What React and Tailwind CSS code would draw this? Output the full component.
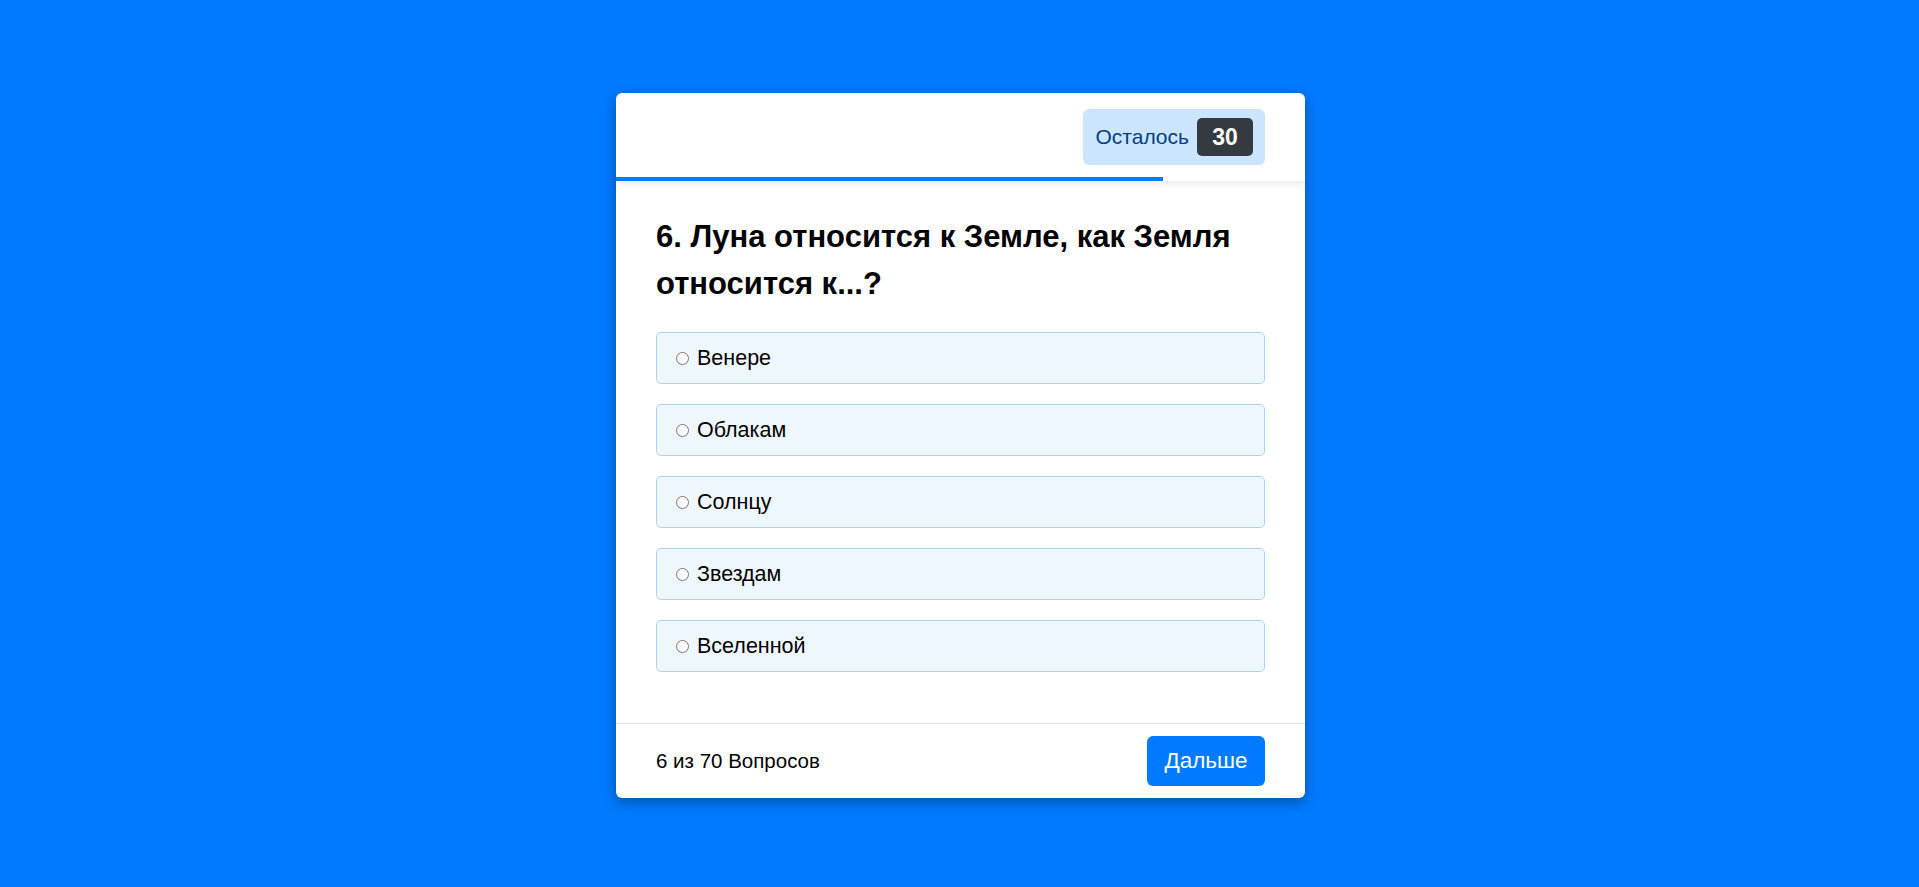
import { useState } from 'react';

const question = {
  number: 6,
  text: 'Луна относится к Земле, как Земля относится к...?',
  options: ['Венере', 'Облакам', 'Солнцу', 'Звездам', 'Вселенной'],
};

const total = 70;
const remaining = 30;
const progress = 79.4;

export default function App() {
  const [picked, setPicked] = useState(null);

  return (
    <div className="min-h-screen bg-[#007bff] flex justify-center pt-[93px] font-['Liberation_Sans',Arial,sans-serif]">
      <div className="w-[689px] ml-[2px] h-fit bg-white rounded-[6px] shadow-[0_4px_14px_rgba(0,0,0,0.35)] flex flex-col overflow-hidden">
        {/* Header with timer */}
        <div className="relative z-10 shadow-[0_4px_6px_rgba(0,0,0,0.07)]">
          <div className="h-[84px] flex items-center justify-end px-10 pt-[4px]">
            <div className="h-[56px] flex items-center gap-2 pl-3 pr-3 bg-[#cce5ff] rounded-[6px]">
              <span className="text-[21px] text-[#004085]">Осталось</span>
              <span className="h-[38px] w-[56px] grid place-items-center rounded-[5px] bg-[#343a40] text-white text-[23px] font-bold">
                {remaining}
              </span>
            </div>
          </div>
          <div className="h-[4px] bg-white">
            <div className="h-full bg-[#007bff]" style={{ width: `${progress}%` }} />
          </div>
        </div>

        {/* Question body */}
        <div className="px-10 pt-8 pb-[51px]">
          <h2 className="text-[31px] leading-[47px] font-bold text-black">
            {question.number}. {question.text}
          </h2>
          <div className="mt-[25px] flex flex-col gap-5">
            {question.options.map((opt, i) => (
              <label
                key={opt}
                className="h-[52px] flex items-center gap-2 pl-[19px] bg-[#eff7fe] border border-[#a9d2f3] rounded-[5px] cursor-pointer"
              >
                <input
                  type="radio"
                  name="answer"
                  checked={picked === i}
                  onChange={() => setPicked(i)}
                  className="m-0 w-[13px] h-[13px]"
                />
                <span className="text-[21.5px] text-black">{opt}</span>
              </label>
            ))}
          </div>
        </div>

        {/* Footer */}
        <div className="border-t border-[#dee2e6] px-10 py-3 flex items-center justify-between">
          <span className="text-[20.5px] text-black">
            {question.number} из {total} Вопросов
          </span>
          <button className="w-[118px] h-[50px] rounded-[6px] bg-[#007bff] text-white text-[22.5px]">
            Дальше
          </button>
        </div>
      </div>
    </div>
  );
}
